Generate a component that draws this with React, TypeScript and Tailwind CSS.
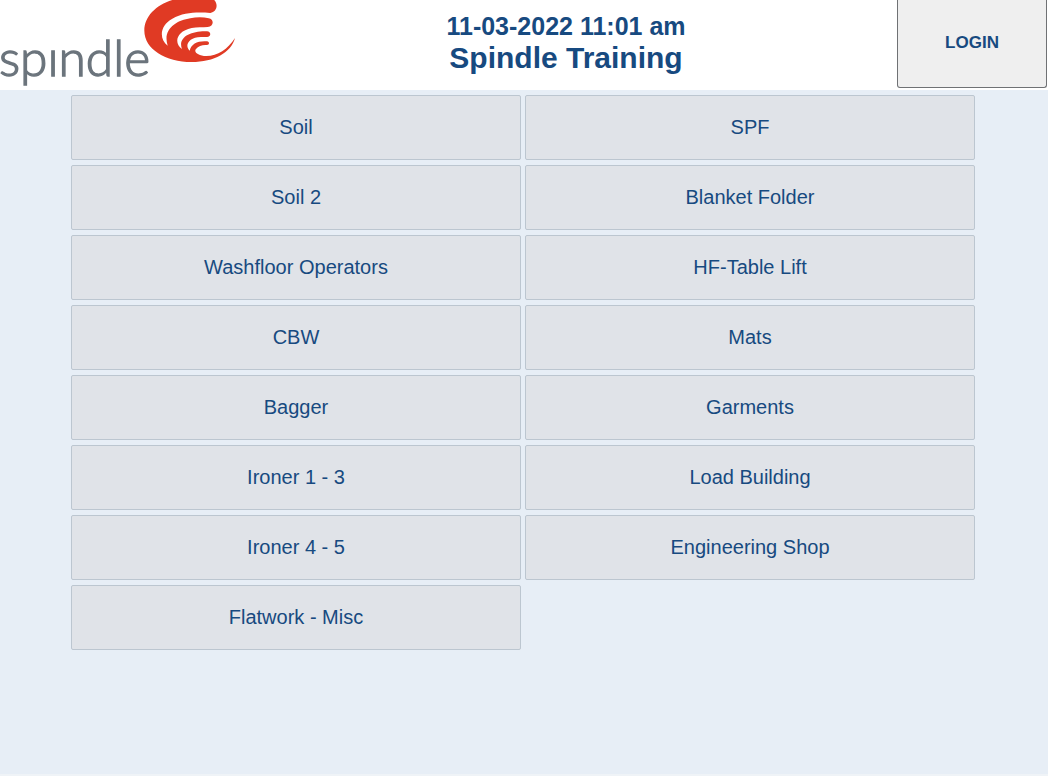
import React from 'react';

const STATIONS = [
  'Soil',
  'SPF',
  'Soil 2',
  'Blanket Folder',
  'Washfloor Operators',
  'HF-Table Lift',
  'CBW',
  'Mats',
  'Bagger',
  'Garments',
  'Ironer 1 - 3',
  'Load Building',
  'Ironer 4 - 5',
  'Engineering Shop',
  'Flatwork - Misc',
];

const Logo: React.FC = () => (
  <svg viewBox="0 0 705 270" className="h-[90px] w-[235px] shrink-0" role="img" aria-label="spindle">
    <text x="-3" y="229" fontSize="149" fill="#6b747c" stroke="#6b747c" strokeWidth="4" className="font-['Lato',sans-serif] font-light">
      spındle
    </text>
    {/* Swirl mark: one body with four arms */}
    <path
      transform="translate(405 0)"
      fill="#e03a24"
      d="M150 -8 C80 0 28 40 28 92 C28 147 92 186 170 186 C238 186 288 158 300 114 C278 148 248 168 214 168 C190 168 175 156 183 147 C190 137 203 134 216 135 C224 134 224 125 216 124 C188 122 169 131 164 152 C148 138 160 111 198 111 L216 111 C229 110 229 95 216 94 C168 92 127 112 141 147 C116 130 123 94 170 84 C186 81 203 82 218 81 C237 80 238 58 221 55 C205 51 184 51 166 55 C124 61 82 88 98 137 C71 116 75 76 112 56 C146 37 185 36 226 39 C249 35 253 4 226 -8 Z"
    />
  </svg>
);

const Header: React.FC = () => (
  <header className="flex h-[90px] items-start bg-white pr-px">
    <Logo />
    <div className="flex-1 pt-2.5 text-center font-bold">
      <p className="text-[25px] leading-8">11-03-2022 11:01 am</p>
      <h1 className="text-[30px] leading-8">Spindle Training</h1>
    </div>
    <button
      type="button"
      className="h-[88px] w-[150px] shrink-0 rounded-b-[3px] border border-t-0 border-[#6f7174] bg-[#efefef] pb-0.5 text-[17px] font-bold"
    >
      LOGIN
    </button>
  </header>
);

export default function App() {
  return (
    <div className="min-h-screen border-b-2 border-[#eff3f7] bg-[#e7eef6] font-['Liberation_Sans',Arial,sans-serif] text-[#174a80]">
      <Header />
      <main className="mx-auto grid max-w-[906px] grid-cols-2 gap-x-1 gap-y-[5px] pt-[5px] pr-0.5">
        {STATIONS.map((name) => (
          <button
            key={name}
            type="button"
            className="h-[65px] rounded-xs border border-[#bcc6d0] bg-[#e0e3e8] pb-0.5 text-xl"
          >
            {name}
          </button>
        ))}
      </main>
    </div>
  );
}
